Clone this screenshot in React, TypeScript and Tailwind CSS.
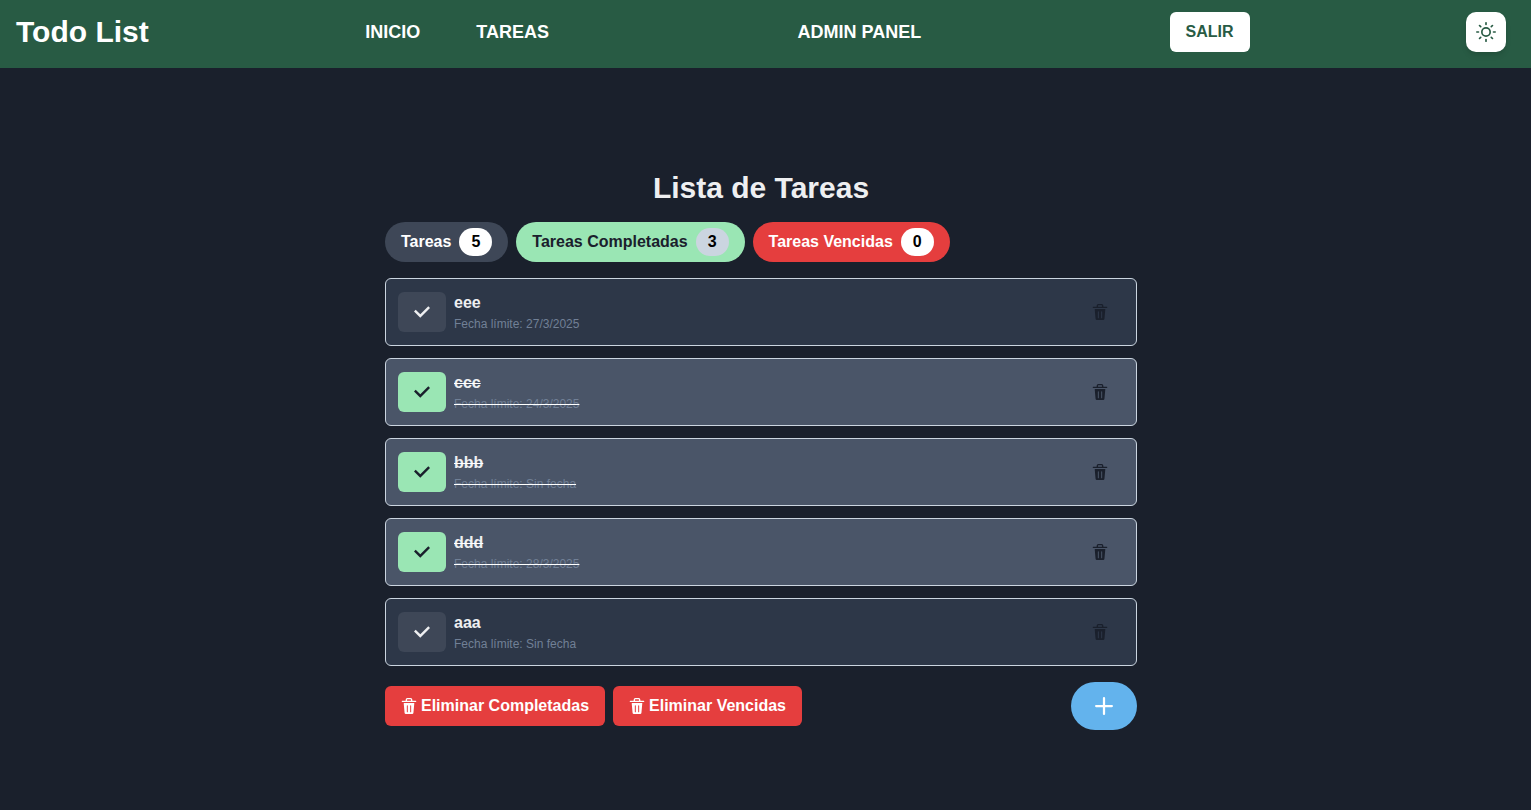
import { FiSun } from "react-icons/fi";

type Task = { name: string; due: string; done: boolean };

const tasks: Task[] = [
  { name: "eee", due: "27/3/2025", done: false },
  { name: "ccc", due: "24/3/2025", done: true },
  { name: "bbb", due: "Sin fecha", done: true },
  { name: "ddd", due: "28/3/2025", done: true },
  { name: "aaa", due: "Sin fecha", done: false },
];

function CheckIcon() {
  return (
    <svg viewBox="0 0 14 14" className="size-4" fill="currentColor">
      <polygon points="5.5 11.9993304 14 3.49933039 12.5 2 5.5 8.99933039 1.5 4.9968652 0 6.49933039" />
    </svg>
  );
}

function DeleteIcon() {
  return (
    <svg viewBox="0 0 24 24" className="size-4 shrink-0" fill="currentColor">
      <path d="M19.452 7.5H4.547a.5.5 0 00-.5.545l1.287 14.136A2 2 0 007.326 24h9.347a2 2 0 001.992-1.819L19.95 8.045a.5.5 0 00-.129-.382.5.5 0 00-.369-.163zm-9.2 13a.75.75 0 01-1.5 0v-9a.75.75 0 011.5 0zm5 0a.75.75 0 01-1.5 0v-9a.75.75 0 011.5 0zM22 4h-4.75a.25.25 0 01-.25-.25V2.5A2.5 2.5 0 0014.5 0h-5A2.5 2.5 0 007 2.5v1.25a.25.25 0 01-.25.25H2a1 1 0 000 2h20a1 1 0 000-2zM9 3.75V2.5a.5.5 0 01.5-.5h5a.5.5 0 01.5.5v1.25a.25.25 0 01-.25.25h-5.5A.25.25 0 019 3.75z" />
    </svg>
  );
}

function AddIcon() {
  return (
    <svg viewBox="0 0 24 24" className="size-[18px]" fill="currentColor">
      <path d="M0,12a1.5,1.5,0,0,0,1.5,1.5h8.75a.25.25,0,0,1,.25.25V22.5a1.5,1.5,0,0,0,3,0V13.75a.25.25,0,0,1,.25-.25H22.5a1.5,1.5,0,0,0,0-3H13.75a.25.25,0,0,1-.25-.25V1.5a1.5,1.5,0,0,0-3,0v8.75a.25.25,0,0,1-.25.25H1.5A1.5,1.5,0,0,0,0,12Z" />
    </svg>
  );
}

function Pill({ label, count, tone, badge }: { label: string; count: number; tone: string; badge: string }) {
  return (
    <button className={`flex h-10 items-center gap-2 rounded-full px-4 font-bold ${tone}`}>
      {label}
      <span className={`flex h-7 items-center rounded-full px-3 text-black ${badge}`}>{count}</span>
    </button>
  );
}

function TaskRow({ name, due, done }: Task) {
  return (
    <li
      className={`flex h-[68px] items-center gap-2 rounded-md border border-[#cbd5e0] px-3 ${
        done ? "bg-[#4a5568] line-through" : "bg-[#2d3748]"
      }`}
    >
      <button
        className={`flex h-10 w-12 items-center justify-center rounded-md ${
          done ? "bg-[#9ae6b4] text-[#1a202c]" : "bg-[#3e4757] text-[#eeeff1]"
        }`}
      >
        <CheckIcon />
      </button>
      <div className="flex-1 text-[#eeeff1]">
        <p className="font-bold leading-6">{name}</p>
        <p className="text-xs leading-[18px]">
          <span className="text-[#718096]">Fecha límite: {due}</span>
        </p>
      </div>
      <button className="flex h-10 w-12 items-center justify-center text-[#1a202c]">
        <DeleteIcon />
      </button>
    </li>
  );
}

export default function App() {
  return (
    <div className="min-h-screen bg-[#1a202c] font-['Liberation_Sans',Arial,sans-serif] text-base text-white">
      <header className="flex h-[68px] items-center bg-[#285b44] pt-3 pr-[25px] pb-4 pl-4 font-bold">
        <h1 className="w-[349.3px] text-3xl leading-9">Todo List</h1>
        <nav className="flex flex-1 items-center text-lg">
          <a className="w-[111px]">INICIO</a>
          <a className="w-[321.3px]">TAREAS</a>
          <a>ADMIN PANEL</a>
        </nav>
        <button className="mr-[216px] h-10 w-20 rounded-md bg-white pr-px text-base text-[#285b44]">SALIR</button>
        <button className="flex size-10 items-center justify-center rounded-[10px] bg-white text-[#285b44] shadow-md">
          <FiSun className="size-5" />
        </button>
      </header>

      <main className="ml-[385px] w-[752px] pt-[102px]">
        <h2 className="text-center text-3xl leading-9 font-bold text-[#eeeff1]">Lista de Tareas</h2>
        <div className="mt-4 flex gap-2">
          <Pill label="Tareas" count={5} tone="bg-[#3e4757] text-white" badge="bg-white" />
          <Pill label="Tareas Completadas" count={3} tone="bg-[#9ae6b4] text-[#1a202c]" badge="bg-[#cbd5e0]" />
          <Pill label="Tareas Vencidas" count={0} tone="bg-[#e53e3e] text-white" badge="bg-white" />
        </div>
        <ul className="mt-4 flex flex-col gap-3">
          {tasks.map((t) => (
            <TaskRow key={t.name} {...t} />
          ))}
        </ul>
        <div className="mt-4 flex items-center gap-2 font-bold">
          <button className="flex h-10 items-center gap-1 rounded-md bg-[#e53e3e] px-4">
            <DeleteIcon />
            Eliminar Completadas
          </button>
          <button className="flex h-10 items-center gap-1 rounded-md bg-[#e53e3e] px-4">
            <DeleteIcon />
            Eliminar Vencidas
          </button>
          <button className="ml-auto flex h-12 items-center rounded-full bg-[#63b3ed] px-6">
            <AddIcon />
          </button>
        </div>
      </main>
    </div>
  );
}
